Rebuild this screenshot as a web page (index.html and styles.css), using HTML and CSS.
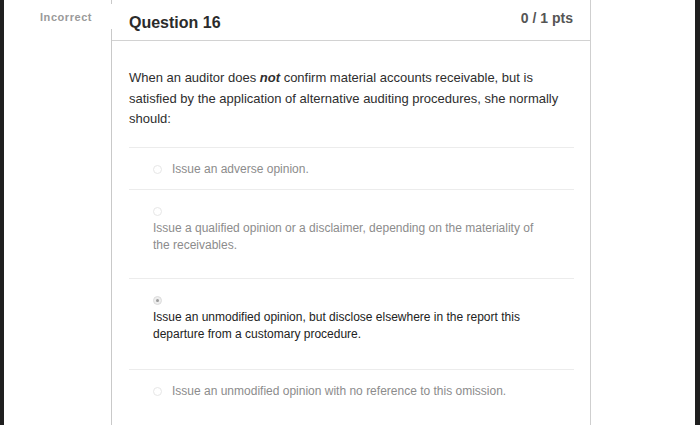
FILE: index.html
```html
<!DOCTYPE html>
<html>
<head>
<meta charset="utf-8">
<link rel="stylesheet" href="styles.css">
</head>
<body>
<div class="frame frame-left"></div>
<main class="page">
  <div class="result-label">Incorrect</div>
  <section class="card">
    <header class="card-header">
      <h2 class="q-title">Question 16</h2>
      <div class="q-points">0 / 1 pts</div>
    </header>
    <div class="card-body">
      <p class="q-text">When an auditor does <em class="q-neg">not</em> confirm material accounts receivable, but is satisfied by the application of alternative auditing procedures, she normally should:</p>
      <div class="answers">
        <div class="answer answer-single">
          <span class="radio"></span><span class="answer-label">Issue an adverse opinion.</span>
        </div>
        <div class="answer answer-multi">
          <span class="radio"></span>
          <span class="answer-label">Issue a qualified opinion or a disclaimer, depending on the materiality of the receivables.</span>
        </div>
        <div class="answer answer-multi answer-selected">
          <span class="radio radio-checked"></span>
          <span class="answer-label">Issue an unmodified opinion, but disclose elsewhere in the report this departure from a customary procedure.</span>
        </div>
        <div class="answer answer-single">
          <span class="radio"></span><span class="answer-label">Issue an unmodified opinion with no reference to this omission.</span>
        </div>
      </div>
    </div>
  </section>
</main>
<div class="frame frame-right"></div>
</body>
</html>
```

FILE: styles.css
```css
html, body {
  margin: 0;
  padding: 0;
  height: 425px;
  overflow: hidden;
  background: #ffffff;
  font-family: "Liberation Sans", Arial, Helvetica, sans-serif;
}

body {
  display: flex;
}

.frame {
  flex: none;
  background: #1f1f1f;
}

.frame-left { width: 4px; }
.frame-right { width: 5px; }

.page {
  flex: 1;
  position: relative;
  background: #ffffff;
}

.result-label {
  position: absolute;
  left: 26px;
  top: 4px;
  width: 82px;
  height: 25px;
  padding: 6px 0 0 10px;
  box-sizing: border-box;
  background: #ffffff;
  color: #9a9a9a;
  font-weight: bold;
  font-size: 11px;
  line-height: 14px;
  letter-spacing: 0.55px;
  z-index: 2;
}

.card {
  margin-left: 107px;
  width: 480px;
  height: 100%;
  box-sizing: border-box;
  border-left: 1px solid #c9c9c9;
  border-right: 1px solid #cfcfcf;
}

.card-header {
  display: flex;
  justify-content: space-between;
  align-items: flex-start;
  height: 40px;
  padding: 0 17px;
  border-bottom: 1px solid #d2d2d2;
}

.q-title {
  margin: 13px 0 0;
  font-size: 16px;
  line-height: 20px;
  font-weight: bold;
  color: #2b2b2b;
}

.q-points {
  margin-top: 9px;
  font-size: 14px;
  line-height: 18px;
  font-weight: bold;
  color: #555555;
}

.card-body {
  padding: 27px 16px 0 17px;
}

.q-text {
  margin: 0 0 17px;
  font-size: 13px;
  line-height: 20.5px;
  color: #2e2e2e;
}

.q-neg {
  font-style: italic;
  font-weight: bold;
}

.answer {
  border-top: 1px solid #ececec;
  padding: 13px 40px 11px 24px;
  font-size: 12px;
  line-height: 17px;
  color: #8c8c8c;
}

.answer-multi {
  padding-bottom: 24px;
}

.answer-multi .answer-label {
  display: block;
}

.answer-selected {
  color: #222222;
  padding-bottom: 26px;
}

.radio {
  display: inline-block;
  width: 9px;
  height: 9px;
  margin-right: 10px;
  border: 1px solid #e6e6e6;
  border-radius: 50%;
  vertical-align: -1px;
  box-sizing: border-box;
  position: relative;
}

.radio-checked {
  background: #eeeeee;
  border-color: #dcdcdc;
}

.radio-checked::after {
  content: "";
  position: absolute;
  left: 2px;
  top: 2px;
  width: 3px;
  height: 3px;
  border-radius: 50%;
  background: #9a9a9a;
}
```
